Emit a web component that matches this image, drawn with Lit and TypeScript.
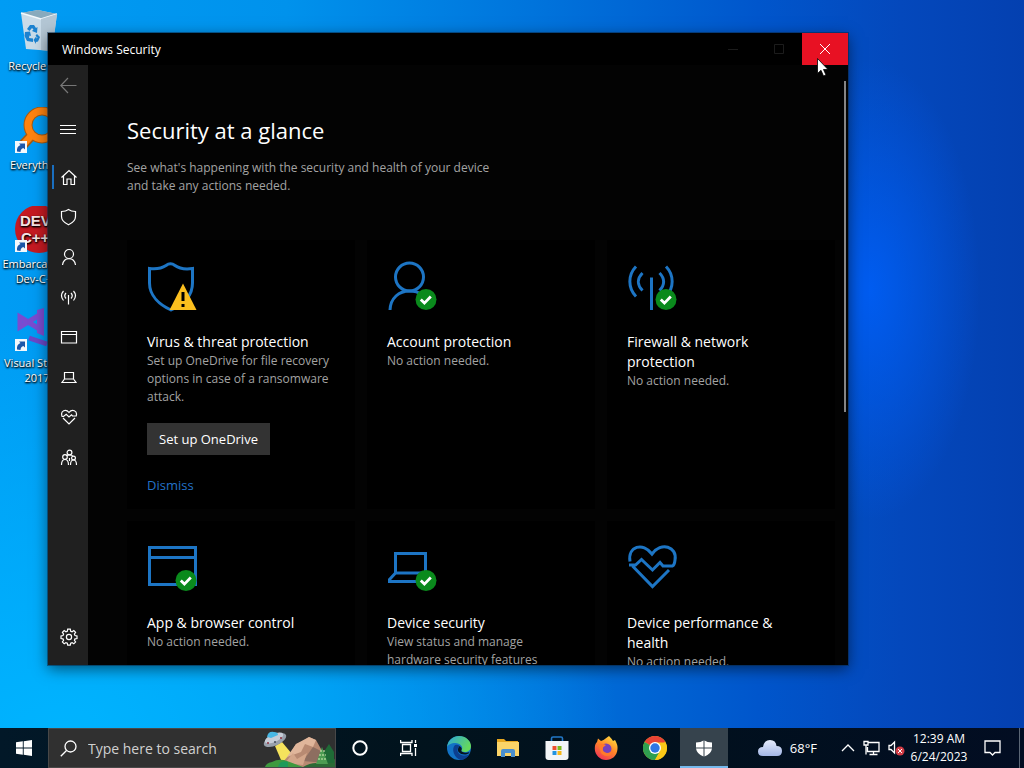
import { LitElement, html, svg, css, nothing, TemplateResult } from "lit";
import { customElement, property } from "lit/decorators.js";

const warningBadge = svg`<path d="M35 21.500 48.500 48H21.500Z" fill="#fcbf1e"/><path d="M33.500 30h3v9h-3zM33.500 42h3v3h-3z" fill="#000"/>`;
const okBadge = (cy: number) => svg`<circle cx="38" cy="${cy}" r="10.500" fill="#0a8a1c"/><path d="M32.800 ${cy} l3.600 3.600 6.400 -6.600" fill="none" stroke="#fff" stroke-width="2.800"/>`;

const cardArt: Record<string, TemplateResult> = {
  shield: svg`<path d="M1.500 6.500C9 7.500 15 5.500 18 3.500Q22.500 0 27 3.500C31 6.500 37 7.500 44.500 6.500V21C44.500 35 34 43 23 48 12 43 1.500 34 1.500 21Z"/>`,
  person: svg`<circle cx="21.500" cy="15" r="14"/><path d="M2 48C2.500 36 11 29 21.500 29S38 34 41 44"/>`,
  antenna: svg`<path d="M23.500 15.500V48M8 4.500C-.2 13-.2 26 8 34.500M14.500 11C9 16.500 9 23 14.500 28.500M38 4.500C46.200 13 46.200 26 38 34.500M31.500 11C37 16.500 37 23 31.500 28.500"/>`,
  window: svg`<path d="M1.500 4.500h46v37h-46zM1.500 14.500h46"/>`,
  laptop: svg`<path d="M7.500 10.500h30v19.500H7.500zM7.500 30L1.500 36.500V38.500H44V36.500L37.500 30"/>`,
  heart: svg`<path d="M2 18.500C-.5 3.500 15-1.500 24 11 33-1.500 49.500 3.500 47 17Q46.500 22 44.500 23H35L32 19.500 24.500 27 13.500 16.500 7.500 22H1M4.500 23 24.500 43.500 41 27"/>`,
};

const navArt: Record<string, TemplateResult> = {
  back: svg`<path d="M16.500 9.500H1M8 2 .8 9.500 8 17"/>`,
  menu: svg`<path d="M0 5.500h16M0 9.500h16M0 13.500h16"/>`,
  home: svg`<path d="M1.500 9.500 9 2.500l7.500 7M3.500 8v8.500h3.500v-5.500h4v5.500h3.500V8"/>`,
  shield: svg`<path d="M1.500 3.500Q6 3.500 8.500 1.500 11 3.500 15.500 3.500V8.500Q15.500 13.500 8.500 16.800 1.500 13.500 1.500 8.500Z"/>`,
  person: svg`<circle cx="9" cy="6" r="4.500"/><path d="M2.500 17Q3.500 10.700 9 10.700T15.500 17"/>`,
  antenna: svg`<path d="M8.500 7V16.500M3.500 3Q-.5 7.500 3.500 12.500M6 5Q3.500 7.700 6 10.500M13.500 3Q17.500 7.500 13.500 12.500M11 5Q13.500 7.700 11 10.500"/>`,
  window: svg`<path d="M1.500 3.500h15v11.500h-15zM1.500 6.500h15"/>`,
  laptop: svg`<path d="M4.500 4.500h9v6.500h-9zM4.500 11 2 14.500h14L13.500 11"/>`,
  heart: svg`<path d="M2 8C.2 2.500 6 .5 9 4.500 12 .5 17.800 2.500 16.200 8H12.500L11.500 6.800 9 9 6.200 6.300 3.500 8.500H1.500M3 10l6 6 6-6"/>`,
  family: svg`<circle cx="9.500" cy="4.500" r="2.400"/><circle cx="5" cy="9" r="2.300"/><circle cx="13.500" cy="10" r="1.900"/><path d="M1.500 17Q1.500 11.500 5 11.500T8.500 17M10.500 17Q10.500 12 13.500 12T16.500 17M6 7.500Q6.500 7 9.500 7T13 8.500M9.500 10v3"/>`,
  gear: svg`<circle cx="9" cy="9" r="2.600"/><path d="M7.700 1.200h2.600l.4 2 1.400.6 1.700-1.200 1.800 1.800-1.200 1.700.6 1.400 2 .4v2.600l-2 .4-.6 1.400 1.200 1.700-1.800 1.800-1.700-1.200-1.400.6-.4 2H7.700l-.4-2-1.400-.6-1.700 1.200-1.800-1.800 1.200-1.700-.6-1.400-2-.4V7.900l2-.4.6-1.400-1.200-1.700 1.800-1.800 1.700 1.200 1.400-.6Z"/>`,
};

@customElement("nav-button")
export class NavButton extends LitElement {
  @property() icon = "home";
  @property() label = "";
  @property({ type: Boolean }) active = false;
  @property({ type: Boolean }) dim = false;

  static styles = css`
    :host { display: block; }
    .nav {
      display: flex; align-items: center; justify-content: center;
      width: 100%; height: 40px; padding: 0 0 0 2px;
      border: 0; background: none; color: #fff;
    }
    .nav:hover { background: #333; }
    .active { background: linear-gradient(#1a6fc0, #1a6fc0) 4px center / 2px 24px no-repeat; }
    .dim { color: #777; }
    svg { fill: none; stroke: currentColor; stroke-width: 1.2; }
  `;

  render() {
    return html`<button class="nav ${this.active ? "active" : ""} ${this.dim ? "dim" : ""}" aria-label=${this.label}>
      <svg width="18" height="18" viewBox="0 0 18 18">${navArt[this.icon]}</svg>
    </button>`;
  }
}

@customElement("security-card")
export class SecurityCard extends LitElement {
  @property() icon = "shield";
  @property() heading = "";
  @property() text = "";
  @property() badge = "";
  @property() action = "";

  static styles = css`
    :host { display: block; background: #000; padding: 22px 16px 14px 20px; }
    .art { display: block; margin-left: 1px; overflow: visible; }
    .stroke { fill: none; stroke: #1d75c4; stroke-width: 3; }
    .title { margin: 22px 24px 0 0; font-size: 14px; line-height: 20px; font-weight: 400; color: #fff; }
    .text { margin: 0; font-size: 12px; line-height: 18px; color: #a3a3a3; }
    .action {
      display: block; height: 32px; margin: 17px 0 20px; padding: 0 12px;
      border: 0; background: #333; color: #fff; font: inherit; font-size: 13px;
    }
    .dismiss { display: block; font-size: 13px; line-height: 20px; color: #2372c8; text-decoration: none; }
  `;

  render() {
    const badge = this.badge === "warning" ? warningBadge
      : this.badge === "ok" ? okBadge(37.5) : nothing;
    return html`
      <svg class="art" width="48" height="48" viewBox="0 0 48 48">
        <g class="stroke">${cardArt[this.icon]}</g>${badge}
      </svg>
      <h2 class="title">${this.heading}</h2>
      <p class="text">${this.text}</p>
      ${this.action
        ? html`<button class="action">${this.action}</button><a class="dismiss" href="#">Dismiss</a>`
        : nothing}`;
  }
}

@customElement("security-window")
export class SecurityWindow extends LitElement {
  static styles = css`
    :host { display: flex; flex-direction: column; background: #030303; color: #fff; overflow: hidden; }
    .titlebar { display: flex; flex: none; height: 32px; background: #000; }
    .caption { flex: 1; padding-left: 14px; font-size: 12px; line-height: 33px; }
    .control { width: 46px; padding: 0; border: 0; background: none; color: #1c1c1c; }
    .close { background: #e81123; color: #fff; }
    .control svg { display: block; margin: auto; fill: none; stroke: currentColor; }
    .body { display: flex; flex: 1; min-height: 0; }
    .sidebar { display: flex; flex-direction: column; flex: none; width: 40px; background: #202020; }
    .menu { margin: 4px 0 8px; }
    .settings { margin: auto 0 8px; }
    .content { flex: 1; min-width: 0; padding: 49px 9px 0 39px; overflow: hidden; }
    .heading { margin: 0; font-size: 22px; line-height: 32px; font-weight: 400; }
    .intro { max-width: 400px; margin: 13px 0 45px; font-size: 12px; line-height: 18px; color: #a3a3a3; }
    .cards { display: grid; grid-template-columns: repeat(3, 1fr); gap: 12px; }
    .scroll { flex: none; width: 4px; padding-top: 16px; }
    .thumb { width: 2px; height: 331px; background: #858585; }
  `;

  render() {
    return html`
      <header class="titlebar">
        <span class="caption">Windows Security</span>
        <button class="control" aria-label="Minimize"><svg width="12" height="12"><path d="M1 6.500h10"/></svg></button>
        <button class="control" aria-label="Maximize"><svg width="12" height="12"><path d="M1.500 1.500h9v9h-9z"/></svg></button>
        <button class="control close" aria-label="Close"><svg width="12" height="12"><path d="M1 1l10 10M11 1 1 11"/></svg></button>
      </header>
      <div class="body">
        <nav class="sidebar">
          <nav-button icon="back" label="Back" dim></nav-button>
          <nav-button class="menu" icon="menu" label="Menu"></nav-button>
          <nav-button icon="home" label="Home" active></nav-button>
          <nav-button icon="shield" label="Virus &amp; threat protection"></nav-button>
          <nav-button icon="person" label="Account protection"></nav-button>
          <nav-button icon="antenna" label="Firewall"></nav-button>
          <nav-button icon="window" label="App &amp; browser control"></nav-button>
          <nav-button icon="laptop" label="Device security"></nav-button>
          <nav-button icon="heart" label="Device health"></nav-button>
          <nav-button icon="family" label="Family options"></nav-button>
          <nav-button class="settings" icon="gear" label="Settings"></nav-button>
        </nav>
        <main class="content">
          <h1 class="heading">Security at a glance</h1>
          <p class="intro">See what's happening with the security and health of your device<br />and take any actions needed.</p>
          <div class="cards">
            <security-card icon="shield" badge="warning" heading="Virus &amp; threat protection"
              text="Set up OneDrive for file recovery options in case of a ransomware attack." action="Set up OneDrive"></security-card>
            <security-card icon="person" badge="ok" heading="Account protection" text="No action needed."></security-card>
            <security-card icon="antenna" badge="ok" heading="Firewall &amp; network protection" text="No action needed."></security-card>
            <security-card icon="window" badge="ok" heading="App &amp; browser control" text="No action needed."></security-card>
            <security-card icon="laptop" badge="ok" heading="Device security" text="View status and manage hardware security features"></security-card>
            <security-card icon="heart" heading="Device performance &amp; health" text="No action needed."></security-card>
          </div>
        </main>
        <div class="scroll"><div class="thumb"></div></div>
      </div>`;
  }
}

const shortcutArrow = svg`<path d="M2 34h12v12H2z" fill="#f4f8fc"/><path d="M4 44.500C3.500 41 5 39 7.500 38L6 36.500H12V42.500L10.300 41C8 42 7.500 43.500 7.500 45Z" fill="#1c56a8"/>`;

const shortcuts = [
  {
    label: "Recycle Bin",
    art: svg`<path d="M8 5 25 2 44 6 39 43 13 41Z" fill="#c9dbe8"/><path d="M8 5 25 2 44 6 28 11Z" fill="#88aabd"/><path d="M8 5 28 11 44 6" fill="none" stroke="#f2f8fc" stroke-width="1.500"/><path d="M28 11 44 6 39 43 28 42Z" fill="#b3c6d4"/><path d="M14 21 17 17H21L23 20 24.500 19 24 25 19 23 20.500 21.500 19 20 16.500 23ZM12 24 17 23.500 18 28 16.500 27.500 16 30 20 30.500V34L14 33 11.500 28ZM24 26 27 29 25 33.500 23 34V36L20.500 32 23.500 28V30.500L24.500 29.500 22.500 27.500Z" fill="#1c82d0"/>`,
  },
  {
    label: "Everything",
    art: svg`<circle cx="29" cy="18" r="14" fill="none" stroke="#a85a10" stroke-width="9"/><path d="M19 28 8 40" stroke="#a85a10" stroke-width="10"/><circle cx="29" cy="18" r="14" fill="none" stroke="#ff8310" stroke-width="7"/><path d="M19 28 8 40" stroke="#ff8310" stroke-width="7"/>${shortcutArrow}`,
  },
  {
    label: "Embarcadero Dev-C++",
    art: svg`<circle cx="26" cy="23" r="24" fill="#c51a22"/><g font-family="Liberation Sans, sans-serif" font-size="15" font-weight="700" fill="#f6e4e4"><text x="7" y="20">DEV</text><text x="8" y="37">C++</text></g>${shortcutArrow}`,
  },
  {
    label: "Visual Studio 2017",
    art: svg`<path d="M7 12 28 25V9L7 22Z" fill="none" stroke="#7a4cd0" stroke-width="5"/><path d="M24 5l7-2v28l-7-3Z" fill="#7a4cd0"/><path d="M16 33 34 39" stroke="#6a48c8" stroke-width="5"/>${shortcutArrow}`,
  },
];

const appArt: { name: string; art: TemplateResult }[] = [
  {
    name: "Microsoft Edge",
    art: svg`<defs><linearGradient id="e1" x1="0" y1="0" x2="1" y2=".5"><stop offset="0" stop-color="#2ba5dc"/><stop offset="1" stop-color="#65d95b"/></linearGradient></defs><circle cx="12" cy="12" r="12" fill="#1273c6"/><path d="M0 11C1 4 6 0 12 0c7 0 12 5 12 10 0 4-3 6-6 6-3 0-4-1-3.500-2C17 11 13 7 8.500 7 4 7 1 9 0 11Z" fill="url(#e1)"/><path d="M8 9C4 13 7 22 14 24 18 23.500 21 21 22 18.500 17 21 11 19 10.500 14.500Q10.400 11.500 12.500 10 10.500 8 8 9Z" fill="#0c3f8f"/><path d="M12.500 10Q10 13 11.500 16 14 19 19 18.500L21.500 17.500Q23 16.500 22 16.200 20 17 17 16.500 13.500 15.500 14.500 14 15.500 12 12.500 10Z" fill="#061420"/>`,
  },
  {
    name: "File Explorer",
    art: svg`<path d="M1 4V3h7l2 2h12v3H1Z" fill="#e8a820"/><path d="M1 6h22v14H1Z" fill="#fbd468"/><path d="M5 21v-6q0-2 2-2h10q2 0 2 2v6h-4v-4H9v4Z" fill="#4a8fcd"/>`,
  },
  {
    name: "Microsoft Store",
    art: svg`<path d="M6.500 6V2.500Q6.500 1 8 1h8q1.500 0 1.500 1.500V6" fill="none" stroke="#2278c8" stroke-width="1.600"/><path d="M.5 5h23v16q0 3-3 3h-17q-3 0-3-3Z" fill="#f3f5f7"/><path d="M7.500 10h4v4h-4z" fill="#ee5030"/><path d="M12.500 10h4v4h-4z" fill="#7dba1e"/><path d="M7.500 15h4v4h-4z" fill="#2394e0"/><path d="M12.500 15h4v4h-4z" fill="#f8b818"/>`,
  },
  {
    name: "Firefox",
    art: svg`<defs><linearGradient id="f1" x1=".8" y1="0" x2=".2" y2="1"><stop offset="0" stop-color="#ffe040"/><stop offset=".45" stop-color="#ff8a28"/><stop offset="1" stop-color="#f02d58"/></linearGradient></defs><path d="M3 6 4 2.500 7 5 9.500 4 15 0Q18 3 19 5L21 4Q24 9 23.500 13C23 20 18 24 12 24S1 19 .8 13Q.6 8 3 6Z" fill="url(#f1)"/><circle cx="12" cy="13" r="5.500" fill="#7540bd"/><path d="M4 8Q8 7 12 9L9 11.500Q8 16 13 17 17 17 18 13 20 19 14 20 7 20 6 14Z" fill="#ff7a2a"/>`,
  },
  {
    name: "Google Chrome",
    art: svg`<circle cx="12" cy="12" r="12" fill="#fbc817"/><path d="M12 12 1.600 6A12 12 0 0 1 22.400 6Z" fill="#e84335"/><path d="M1.600 6A12 12 0 0 0 12 24L17.200 15 12 12Z" fill="#2f9f50"/><path d="M12 6.500H22.600A12 12 0 0 1 12 24L17 15Z" fill="#fbc817"/><circle cx="12" cy="12" r="6" fill="#fff"/><circle cx="12" cy="12" r="4.700" fill="#2f76e4"/>`,
  },
];

@customElement("task-bar")
export class TaskBar extends LitElement {
  static styles = css`
    :host { display: flex; height: 40px; background: linear-gradient(90deg, #021828, #01131d 40%, #01101e 70%, #020d22); color: #fff; }
    svg { display: block; }
    button { padding: 0; border: 0; background: none; color: inherit; font: inherit; }
    .item { display: flex; align-items: center; justify-content: center; flex: none; width: 48px; }
    .line { fill: none; stroke: #fff; stroke-width: 1.3; }
    .search {
      display: flex; align-items: center; box-sizing: border-box; flex: 0 1 288px; min-width: 0;
      padding-left: 11px; gap: 11px; background: #303030; border: 1px solid #484848;
    }
    .field { flex: 1; min-width: 0; padding: 0; border: 0; outline: 0; background: none; color: #ddd; font: inherit; font-size: 14px; }
    .field::placeholder { color: #d0d0d0; opacity: 1; }
    .scene { flex: none; }
    .apps { display: flex; gap: 1px; padding-left: 3px; }
    .active { background: linear-gradient(#76b9ed, #76b9ed) bottom / 100% 2px no-repeat #36434d; }
    .tray { display: flex; align-items: center; margin-left: auto; }
    .weather { display: flex; align-items: center; gap: 8px; margin-right: 24px; font-size: 13px; }
    .status { display: flex; align-items: center; gap: 8px; margin-right: 1px; }
    .clock { width: 66px; font-size: 12px; line-height: 18px; text-align: center; white-space: nowrap; }
    .notify { width: 40px; height: 40px; display: flex; align-items: center; justify-content: center; }
    .show { width: 4px; height: 40px; margin-left: 7px; border-left: 1px solid #5b6675; }
  `;

  render() {
    return html`
      <button class="item" aria-label="Start"><svg width="16" height="16" fill="#fff"><path d="M0 2.300 6.800 1.300V7.600H0zM7.700 1.200 16 0V7.600H7.700zM0 8.400H6.800V14.700L0 13.700zM7.700 8.400H16V16L7.700 14.800z"/></svg></button>
      <label class="search">
        <svg width="17" height="17" class="line"><circle cx="10.500" cy="6.500" r="5.500"/><path d="M6.500 10.500.8 16.200"/></svg>
        <input class="field" type="text" placeholder="Type here to search" aria-label="Search" />
        <svg class="scene" width="72" height="38" viewBox="0 0 72 38">
          <path d="M12 17 18 31H34L19 13Z" fill="#f5e35c"/>
          <path d="M18 35 27 25 33 15 40 12 46 8 53 11 58 20 70 34V38H18Z" fill="#b88a72"/>
          <path d="M33 15 46 8 53 11 50 18 42 15 38 23 24 28Z" fill="#e0b69b"/>
          <path d="M40 32 50 18 58 22 62 34Z" fill="#8d6e60"/>
          <path d="M22 34 30 24 34 30 44 24 40 36Z" fill="#d3a68a"/>
          <path d="M2 38Q3 34 9 33 16 29 24 32L40 38Z" fill="#3e9a3f"/>
          <path d="M15 38Q17 30 25 33V38Z" fill="#1f9a5a"/>
          <path d="M40 38Q50 32 60 35L72 30V38Z" fill="#2b6a35"/>
          <path d="M66 15 71 23V34H57L60 24Z" fill="#1f6b36"/>
          <path d="M59 18 65 35H53Z" fill="#4c9c52"/>
          <path d="M55 30h9M56 26h7M57 22h5" stroke="#d6edb8" stroke-dasharray="2 1"/>
          <ellipse cx="12" cy="11" rx="12" ry="5.500" transform="rotate(-24 12 11)" fill="#98a0ab"/>
          <ellipse cx="11" cy="9" rx="10" ry="4" transform="rotate(-24 11 9)" fill="#c6ccd6"/>
          <path d="M4 8Q5 2 11 3 15 3 15 6L8 9Z" fill="#48b8e4"/>
          <circle cx="5" cy="14" r="1" fill="#8d3040"/><circle cx="12" cy="13" r="1" fill="#404a58"/><circle cx="18" cy="9" r="1" fill="#8d3040"/>
        </svg>
      </label>
      <button class="item" aria-label="Cortana"><svg width="16" height="16"><circle cx="8" cy="8" r="6.700" fill="none" stroke="#fff" stroke-width="2"/></svg></button>
      <button class="item" aria-label="Task View"><svg width="17" height="16" class="line"><path d="M2.500 4.500h8v7h-8zM.6 0V2.500H12V0M.6 16V13.500H12V16M15.500 0v3M15.500 8v8"/><path d="M14 4h3v3h-3z" fill="#fff" stroke="none"/></svg></button>
      <div class="apps">
        ${appArt.map((a) => html`<button class="item" aria-label=${a.name}><svg width="24" height="24" viewBox="0 0 24 24">${a.art}</svg></button>`)}
        <button class="item active" aria-label="Windows Security"><svg width="16" height="17" fill="#fff"><path d="M0 2.500Q5 2.500 7.500.5V7.500H0zM8.500.5Q11 2.500 16 2.500V7.500H8.500zM0 8.500H7.500V16.500Q.8 14 0 8.500zM8.500 8.500H16Q15.200 14 8.500 16.500z"/></svg></button>
      </div>
      <div class="tray">
        <button class="weather">
          <svg width="24" height="16"><defs><linearGradient id="c1" x2="0" y2="1"><stop stop-color="#e6ecfb"/><stop offset="1" stop-color="#a3b6e6"/></linearGradient></defs><path d="M5 16Q0 16 0 11.500T5 7Q6 0 12 0T18.500 6Q24 6 24 11T19 16Z" fill="url(#c1)"/></svg>68°F</button>
        <div class="status">
          <svg width="14" height="14" class="line"><path d="M1 10 7 4l6 6"/></svg>
          <svg width="17" height="16" class="line"><path d="M5 2.500h11v9H4.500V7M1 1.500h4v3.500H1zM3 5v9.500M10.500 11.500v3M6.500 14.500h8"/></svg>
          <svg width="17" height="16"><path class="line" d="M1 5.500h2L6.500 2v11L3 9.500H1z"/><circle cx="12" cy="11" r="4.500" fill="#d23c45"/><path d="M10 9l4 4M14 9l-4 4" stroke="#fff"/></svg>
        </div>
        <div class="clock">12:39 AM<br />6/24/2023</div>
        <button class="notify" aria-label="Notifications"><svg width="17" height="18" class="line"><path d="M1 2h15v11.500h-5L8.500 16 6 13.500H1z"/></svg></button>
        <div class="show"></div>
      </div>`;
  }
}

@customElement("app-root")
export class AppRoot extends LitElement {
  static styles = css`
    :host {
      display: flex; flex-direction: column; height: 100vh; overflow: hidden; position: relative;
      font-family: "Open Sans", "Noto Sans", sans-serif;
      background:
        radial-gradient(ellipse 110px 230px at 870px 290px, #005cf0 0%, #005cf000 100%),
        radial-gradient(ellipse 560px 420px at 60px 740px, #00b4ff 0%, #00b4ff00 100%),
        linear-gradient(90deg, #009cf4 0%, #0092ec 28%, #0074dc 52%, #0056cc 74%, #0448bc 88%, #0440b0 100%);
    }
    .desktop { position: relative; flex: 1; min-height: 0; }
    .shortcuts { display: flex; flex-direction: column; width: 74px; padding-top: 8px; }
    .shortcut {
      display: flex; flex-direction: column; align-items: center; gap: 2px; height: 99px;
      color: #fff; text-decoration: none; font-size: 11px; line-height: 15px; text-align: center;
      text-shadow: 0 1px 2px #000, 1px 1px 2px #000;
    }
    .shortcut svg { flex: none; }
    .window { position: absolute; inset: 33px 176px 63px 48px; box-shadow: 0 0 0 1px #0a2a4a88, 0 4px 14px #0008; }
    .cursor { position: absolute; left: 817px; top: 58px; }
  `;

  render() {
    return html`
      <div class="desktop">
        <div class="shortcuts">
          ${shortcuts.map((s) => html`<a class="shortcut" href="#"><svg width="48" height="48" viewBox="0 0 48 48">${s.art}</svg><span>${s.label}</span></a>`)}
        </div>
        <security-window class="window"></security-window>
        <svg class="cursor" width="12" height="20" viewBox="0 0 12 20"><path d="M.5.5V15.500L4 12.300 6.500 18 9 17 6.500 11.500H11Z" fill="#fff" stroke="#000" stroke-width=".8"/></svg>
      </div>
      <task-bar></task-bar>`;
  }
}
